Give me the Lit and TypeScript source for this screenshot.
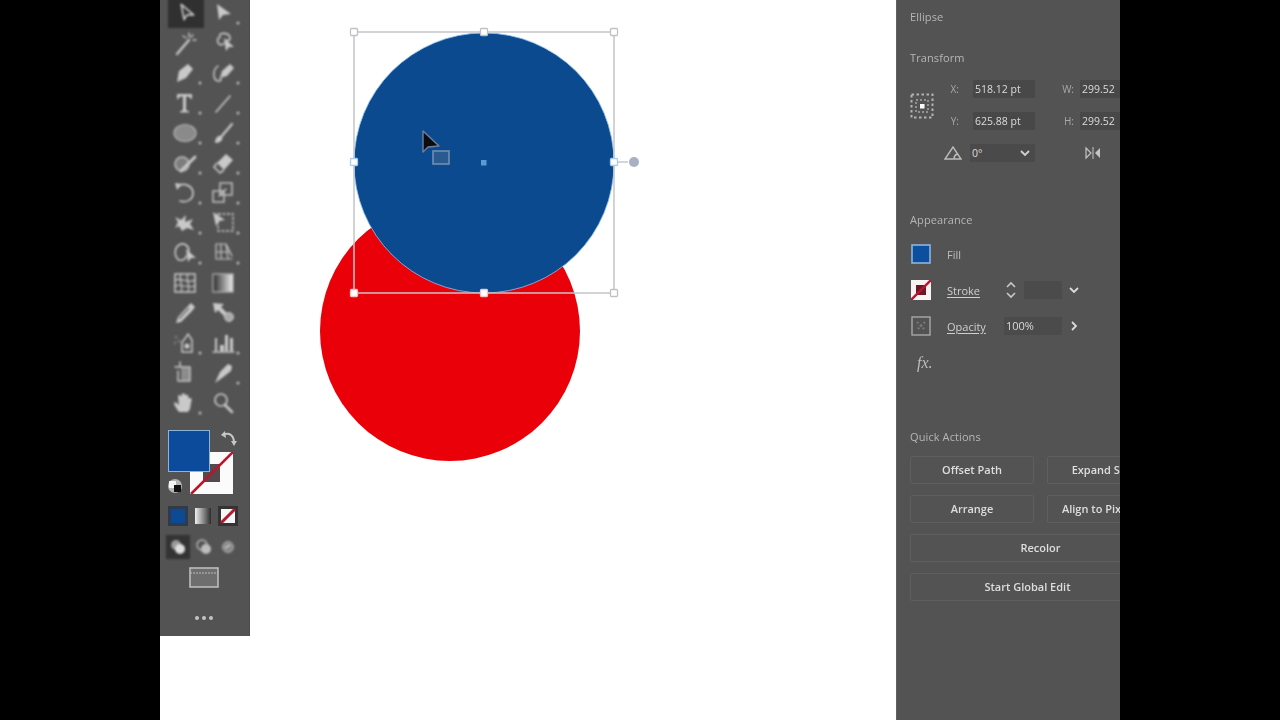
import { LitElement, html, css, svg } from "lit";
import { customElement } from "lit/decorators.js";

const S = "#c9c9c9";
const line = (d: string, w = 1.6) => svg`<path d=${d} fill="none" stroke=${S} stroke-width=${w} stroke-linecap="round" stroke-linejoin="round"/>`;
const fill = (d: string, c = S) => svg`<path d=${d} fill=${c}/>`;

type Tool = { g: unknown; dot?: boolean; sel?: boolean };
const tools: Tool[] = [
  { sel: true, g: line("M14 6 L17 22 L20 17 L27 17 Z", 1.8) },
  { dot: true, g: fill("M13 6 L15 22 L19 17 L27 16 Z") },
  { dot: false, g: svg`${line("M11 26 L23 12", 2.4)}${line("M23 5 V9 M17 8 L20 10 M27 12 H30 M27 7 L25 9", 1.4)}` },
  { g: svg`${line("M16 10 C13 4 24 4 26 9 C27 12 24 13 23 12", 1.6)}${line("M14 10 C12 16 18 19 20 15", 1.6)}${fill("M20 10 L22 23 L25 19 L30 19 Z")}` },
  { dot: true, g: fill("M11 24 L13 13 L22 6 L27 11 L20 20 Z") },
  { dot: true, g: svg`${fill("M16 20 L18 13 L26 6 L30 10 L23 18 Z")}${line("M14 8 C8 12 9 22 14 23 C17 24 18 21 16 20", 1.5)}` },
  { dot: true, g: fill("M11 6 H26 V11 H24.5 C24 9 23 8.5 21 8.5 H20 V21 C20 22.5 21 23 23 23 V24.5 H14 V23 C16 23 17 22.5 17 21 V8.5 H16 C14 8.5 13 9 12.5 11 H11 Z") },
  { dot: true, g: line("M12 24 L26 8", 1.6) },
  { dot: true, g: svg`<ellipse cx="19" cy="15" rx="11" ry="8.5" fill="#8a8a8a" stroke="#b5b5b5" stroke-width="1.2"/>` },
  { dot: true, g: svg`${line("M17 19 L28 6", 2.2)}${fill("M11 25 C11 20 14 17 17 18 C20 20 18 25 11 25 Z")}` },
  { dot: true, g: svg`<circle cx="16" cy="16" r="7" fill="#7d7d7d" stroke="#c0c0c0" stroke-width="1.5"/>${line("M15 23 L29 9", 3)}` },
  { dot: true, g: svg`<path d="M13 15 L22 6 L29 12 L20 22 Z" fill=${S}/><path d="M13 15 L10 19 L16 25 L20 22" fill="none" stroke=${S} stroke-width="1.6"/>` },
  { dot: true, g: svg`${line("M12 8 C18 4 27 8 27 15 C27 22 20 25 14 23", 1.7)}${fill("M9 5 L16 6 L11 12 Z")}` },
  { dot: true, g: svg`<rect x="9" y="13" width="11" height="11" fill="none" stroke=${S} stroke-width="1.4"/><rect x="16" y="5" width="12" height="12" fill="none" stroke=${S} stroke-width="1.4"/>${line("M15 18 L22 11", 1.2)}` },
  { dot: true, g: svg`${fill("M9 9 L15 12 L20 7 L19 14 L27 11 L24 16 L28 22 L21 20 L16 23 L13 18 L9 20 L12 14 Z")}` },
  { dot: true, g: svg`<rect x="14" y="6" width="15" height="17" fill="none" stroke=${S} stroke-width="1.4" stroke-dasharray="3 1.5"/>${fill("M9 4 L12 18 L15 13 L21 12 Z")}` },
  { dot: true, g: svg`${line("M13 7 C8 10 8 19 13 22 C18 23 20 20 20 18 M13 7 C18 4 23 8 23 13", 1.6)}${fill("M20 11 L22 24 L25 20 L30 20 Z")}` },
  { dot: true, g: svg`${line("M12 21 V6 L22 6 L28 18 M12 21 H28 M12 14 H26 M17 6 V21 M22 6 L24 21", 1.2)}` },
  { g: svg`<rect x="9" y="6" width="20" height="18" fill="none" stroke=${S} stroke-width="1.5"/>${line("M9 12 C15 9 22 16 29 12 M9 18 C15 15 22 21 29 18 M15 6 C12 12 18 18 15 24 M22 6 C19 12 25 18 22 24", 1.2)}` },
  { g: svg`<defs><linearGradient id="gr"><stop offset="0" stop-color="#2b2b2b"/><stop offset="1" stop-color="#f0f0f0"/></linearGradient></defs><rect x="9" y="6" width="20" height="18" fill="url(#gr)" stroke="#b0b0b0" stroke-width="1.3"/>` },
  { dot: false, g: svg`${fill("M10 25 L12 19 L22 8 L25 5 L29 9 L26 13 L15 24 Z")}<path d="M13 21 L23 10" stroke="#666" stroke-width="1.2"/>` },
  { g: svg`${fill("M9 5 L20 6 L17 9 L23 15 L20 18 L14 12 L11 15 Z")}<circle cx="25" cy="19" r="4.5" fill="#aaa" stroke=${S}/>` },
  { dot: true, g: svg`<path d="M18 12 L22 6 L26 12 V24 H16 V14 Z" fill="none" stroke=${S} stroke-width="1.5"/><circle cx="21" cy="18" r="2.6" fill=${S}/><circle cx="10" cy="9" r="1.6" fill="#777"/><circle cx="13" cy="13" r="1.6" fill="#777"/><circle cx="9" cy="15" r="1.4" fill="#777"/>` },
  { dot: true, g: svg`${line("M9 24 H30", 1.4)}${fill("M11 10 H13 V23 H11 Z M16 17 H20 V23 H16 Z M21 7 H24 V23 H21 Z M26 10 H29 V23 H26 Z")}` },
  { g: svg`${line("M9 9 H14 V4 M14 9 H24 V23 H12 V13", 1.5)}${fill("M15 10 H23 V22 H15 Z", "#8c8c8c")}` },
  { dot: true, g: svg`${fill("M11 25 L16 14 L24 6 L28 8 L27 13 L18 20 Z")}` },
  { dot: true, g: fill("M13 24 C10 20 8 17 8 15 C9 13 11 15 13 17 L12 8 C13 6 15 7 15 9 L16 6 C17 5 19 5 19 7 L20 7 C22 6 23 8 22 10 L24 10 C26 10 26 12 25 15 L24 21 L22 24 Z") },
  { g: svg`<circle cx="17" cy="12" r="6" fill="none" stroke=${S} stroke-width="1.7"/>${line("M21 17 L28 24", 2.6)}` },
];

@customElement("app-root")
export class AppRoot extends LitElement {
  static styles = css`
    :host { display: block; }
    .page { display: flex; width: 1280px; height: 720px; background: #000; overflow: hidden;
      font-family: "Open Sans", "Liberation Sans", sans-serif; }
    .gutter { width: 160px; flex: none; background: #000; }
    .work { width: 736px; flex: none; display: flex; background: #fff; }
    .toolbar { width: 90px; height: 636px; flex: none; background: #535353; display: flex; flex-direction: column;
      align-items: flex-start; border-right: 1px solid #4a4a4a; box-sizing: border-box; overflow: hidden; }
    .tools { display: grid; grid-template-columns: 38px 38px; grid-auto-rows: 30px; margin: -2px 0 0 6px; filter: blur(0.8px); }
    .cell { width: 38px; height: 30px; display: block; }
    .cell.sel { background: #303030; width: 36px; margin-left: 2px; }
    .colors { position: relative; width: 90px; height: 70px; margin-top: 12px; flex: none; filter: blur(0.6px); }
    .fillsw { position: absolute; left: 8px; top: 0; width: 42px; height: 42px; box-sizing: border-box; background: #0c4a9b; border: 1.5px solid #8fb4dc; z-index: 1; }
    .strokesw { position: absolute; left: 30px; top: 22px; width: 43px; height: 42px; }
    .swap { position: absolute; left: 60px; top: 0; width: 18px; height: 18px; }
    .defaults { position: absolute; left: 7px; top: 48px; width: 16px; height: 16px; }
    .modes { display: flex; gap: 5px; margin: 6px 0 0 8px; filter: blur(0.7px); flex: none; }
    .mode { width: 20px; height: 20px; display: block; }
    .draws { display: flex; gap: 4px; margin: 9px 0 0 6px; filter: blur(0.8px); align-items: center; flex: none; }
    .draw { width: 20px; height: 20px; display: block; }
    .draw.on { background: #333; width: 24px; height: 24px; }
    .screen { width: 30px; height: 21px; margin: 8px 0 0 29px; display: block; filter: blur(0.6px); flex: none; }
    .more { margin: 28px 0 0 35px; display: flex; gap: 3px; filter: blur(0.6px); }
    .more i { width: 4px; height: 4px; background: #c4c4c4; border-radius: 50%; display: block; }
    .stage { flex: 1; min-width: 0; position: relative; }
    .art { display: block; width: 646px; height: 720px; filter: blur(0.5px); }
    .panel { width: 224px; flex: none; height: 720px; background: #535353; box-sizing: border-box; padding-left: 13px;
      overflow: hidden; border-left: 1px solid #606060; color: #d6d6d6; font-size: 11px; white-space: nowrap; }
    .panel > * { filter: blur(0.7px); }
    .title { height: 16px; line-height: 16px; color: #b6b6b6; font-size: 11px; letter-spacing: 0.1px; }
    .t1 { margin-top: 9px; }
    .t2 { margin-top: 25px; }
    .t3 { margin-top: 50px; }
    .t4 { margin-top: 56px; }
    .xf { display: grid; grid-template-columns: 24px 39px 62px 45px 90px; grid-template-rows: 18px 18px 18px; row-gap: 14px; margin-top: 14px; align-items: center; }
    .anchor { grid-row: 1 / 3; grid-column: 1; width: 24px; height: 26px; display: block; margin-top: 2px; }
    .lbl { text-align: right; padding-right: 14px; color: #a9a9a9; font-size: 10px; }
    .lbl2 { padding-right: 6px; }
    .fld { background: #484848; height: 18px; line-height: 18px; padding-left: 2px; color: #dcdcdc; font-size: 10.5px; }
    .angle { display: block; width: 18px; height: 14px; justify-self: end; margin-right: 11px; }
    .anglef { display: flex; justify-content: space-between; align-items: center; padding-right: 4px; background: #4a4a4a; margin-left: -3px; }
    .flip { display: block; width: 20px; height: 14px; grid-column: 4 / 6; margin-left: 48px; }
    .prop { display: flex; align-items: center; height: 20px; margin-top: 16px; }
    .sw { width: 20px; height: 20px; flex: none; display: block; margin-left: 1px; }
    .plabel { margin-left: 16px; width: 57px; font-size: 11px; color: #cfcfcf; }
    .u { text-decoration: underline; text-underline-offset: 2px; }
    .fill-l { color: #bdbdbd; }
    .stepper { width: 14px; height: 22px; display: block; }
    .sfld { width: 38px; height: 18px; background: #4b4b4b; margin-left: 6px; }
    .ofld { width: 58px; height: 18px; line-height: 18px; background: #4b4b4b; padding-left: 2px; box-sizing: border-box; font-size: 11px; color: #d8d8d8; }
    .chev { width: 12px; height: 10px; display: block; margin-left: 6px; }
    .fx { margin: 17px 0 0 7px; height: 20px; line-height: 20px; font-family: "Liberation Serif", serif; font-style: italic; font-size: 16px; color: #bcbcbc; }
    .btns { display: grid; grid-template-columns: 124px 124px; column-gap: 13px; row-gap: 11px; margin-top: 11px; width: 261px; }
    .btn { height: 28px; line-height: 26px; box-sizing: border-box; border: 1px solid #5f5f5f; border-radius: 2px; text-align: center; font-size: 11px; font-weight: 600; color: #dedede; }
    .wide { grid-column: 1 / 3; }
    .shift { padding-right: 26px; }
  `;

  render() {
    const handles: [number, number][] = [[354, 32], [484, 32], [614, 32], [354, 162], [614, 162], [354, 293], [484, 293], [614, 293]];
    return html`<div class="page">
      <div class="gutter"></div>
      <div class="work">
        <div class="toolbar">
          <div class="tools">
            ${tools.map((t) => html`<svg class="cell ${t.sel ? "sel" : ""}" viewBox="0 0 38 30">${t.g}${t.dot ? svg`<circle cx=${t.sel ? 33 : 34} cy="25" r="1.5" fill="#bdbdbd"/>` : ""}</svg>`)}
          </div>
          <div class="colors">
            <div class="fillsw"></div>
            <svg class="strokesw" viewBox="0 0 43 42">
              <path d="M0 0H43V42H0Z M13 12V30H30V12Z" fill="#fbfbfb" fill-rule="evenodd"/>
              <rect x="13" y="12" width="17" height="18" fill="#534b4b"/>
              <path d="M1 42 L43 0" stroke="#b4182f" stroke-width="2.6"/>
            </svg>
            <svg class="swap" viewBox="0 0 18 18"><path d="M3 5 C9 2 14 5 14 13" fill="none" stroke="#c6c6c6" stroke-width="2"/><path d="M5 1 L1 5 L6 8 Z M11 11 H17 L14 16 Z" fill="#c6c6c6"/></svg>
            <svg class="defaults" viewBox="0 0 16 16"><circle cx="8" cy="8" r="7" fill="#b5b5b5"/><rect x="2" y="3" width="7" height="7" fill="#f4f4f4"/><rect x="7" y="7" width="7" height="7" fill="#111"/></svg>
          </div>
          <div class="modes">
            <svg class="mode" viewBox="0 0 20 20"><rect width="20" height="20" fill="#2e3b4c"/><rect x="3" y="3" width="14" height="14" fill="#0d4a96"/></svg>
            <svg class="mode" viewBox="0 0 20 20"><defs><linearGradient id="gm"><stop offset="0" stop-color="#f0f0f0"/><stop offset="1" stop-color="#2b2b2b"/></linearGradient></defs><rect x="2" y="2" width="16" height="16" fill="url(#gm)"/></svg>
            <svg class="mode" viewBox="0 0 20 20"><rect width="20" height="20" fill="#333"/><rect x="3" y="3" width="14" height="14" fill="#f5f5f5"/><path d="M3 17 L17 3" stroke="#b4182f" stroke-width="3"/></svg>
          </div>
          <div class="draws">
            <svg class="draw on" viewBox="0 0 24 24"><circle cx="10" cy="10" r="5" fill="#9a9a9a"/><circle cx="14" cy="14" r="5" fill="#dedede"/></svg>
            <svg class="draw" viewBox="0 0 20 20"><circle cx="8" cy="8" r="5" fill="none" stroke="#bbb" stroke-width="1.4"/><circle cx="12" cy="12" r="5" fill="#bdbdbd"/></svg>
            <svg class="draw" viewBox="0 0 20 20"><circle cx="10" cy="10" r="5.5" fill="#8a8a8a" stroke="#aaa"/><path d="M7 11 L12 8" stroke="#ddd" stroke-width="1.3"/></svg>
          </div>
          <svg class="screen" viewBox="0 0 30 21"><rect x="1" y="1" width="28" height="19" fill="#6e6e6e" stroke="#bcbcbc" stroke-width="1.6"/><path d="M1 6 H29" stroke="#bcbcbc" stroke-width="1.2" stroke-dasharray="2 1"/></svg>
          <div class="more"><i></i><i></i><i></i></div>
        </div>
        <div class="stage">
          <svg class="art" viewBox="250 0 646 720">
            <circle cx="450" cy="331" r="130" fill="#e90008"/>
            <circle cx="484" cy="163" r="130" fill="#0c4a8f" stroke="#8fc2ee" stroke-width="0.8"/>
            <rect x="354" y="32" width="260" height="261" fill="none" stroke="#c3c5c9" stroke-width="1.5"/>
            <path d="M614 162 H628" stroke="#c3c5c9" stroke-width="1.4"/>
            <circle cx="634" cy="162" r="5" fill="#aab0c4"/>
            ${handles.map(([x, y]) => {
              const solid = y === 293 && x < 600;
              const side = y === 162;
              return svg`<rect x=${x - 3.5} y=${y - 3.5} width="7" height="7" rx="1" fill="#fff" stroke=${solid ? "#f3c4c4" : side ? "#a9cdee" : "#bfc1c5"} stroke-width="1.3"/>`;
            })}
            <rect x="481" y="160" width="5.5" height="5.5" fill="#5b9bd5"/>
            <path d="M423 131 L423 152 L428 147 L439 146 Z" fill="#0b0d12" stroke="#6f8199" stroke-width="1.4" stroke-linejoin="round"/>
            <rect x="433" y="151" width="16" height="13" fill="#2a5a90" stroke="#6f8fb2" stroke-width="1.6"/>
          </svg>
        </div>
      </div>
      <div class="panel">
        <div class="title t1">Ellipse</div>
        <div class="title t2">Transform</div>
        <div class="xf">
          <svg class="anchor" viewBox="0 0 24 26">
            <rect x="1.5" y="1.5" width="21" height="23" fill="none" stroke="#b4b4b4" stroke-width="2" stroke-dasharray="2.5 2.5"/>
            <rect x="6" y="7" width="12" height="12" fill="none" stroke="#a8a8a8" stroke-width="1.5" stroke-dasharray="2 2"/>
            <rect x="10" y="11" width="4.5" height="4.5" fill="#fff"/>
          </svg>
          <div class="lbl">X:</div><div class="fld">518.12 pt</div><div class="lbl lbl2">W:</div><div class="fld">299.52</div>
          <div class="lbl">Y:</div><div class="fld">625.88 pt</div><div class="lbl lbl2">H:</div><div class="fld">299.52</div>
          <div></div>
          <svg class="angle" viewBox="0 0 18 14"><path d="M1 13 H17 L9 1 Z M10 13 C10 10 11 9 13 8" fill="none" stroke="#bcbcbc" stroke-width="1.4"/></svg>
          <div class="fld anglef"><span>0°</span><svg class="chev" viewBox="0 0 12 10"><path d="M2 3 L6 7 L10 3" fill="none" stroke="#d0d0d0" stroke-width="1.8"/></svg></div>
          <svg class="flip" viewBox="0 0 20 14"><path d="M3 2 V12 L8 7 Z" fill="none" stroke="#c4c4c4" stroke-width="1.2"/><path d="M10 1 V13" stroke="#c4c4c4"/><path d="M17 2 V12 L12 7 Z" fill="#c4c4c4"/></svg>
        </div>
        <div class="title t3">Appearance</div>
        <div class="prop">
          <svg class="sw" viewBox="0 0 20 20"><rect x="1" y="1" width="18" height="18" fill="#0c4f9e" stroke="#8cb4de" stroke-width="1.6"/></svg>
          <span class="plabel fill-l">Fill</span>
        </div>
        <div class="prop">
          <svg class="sw" viewBox="0 0 20 20"><rect width="20" height="20" fill="#f7f3f3"/><rect x="5" y="5" width="10" height="10" fill="#6b1826"/><path d="M0 20 L20 0" stroke="#b4182f" stroke-width="2.4"/></svg>
          <span class="plabel u">Stroke</span>
          <svg class="stepper" viewBox="0 0 14 22"><path d="M3 8 L7 4 L11 8 M3 14 L7 18 L11 14" fill="none" stroke="#c8c8c8" stroke-width="1.6"/></svg>
          <div class="sfld"></div>
          <svg class="chev" viewBox="0 0 12 10"><path d="M2 3 L6 7 L10 3" fill="none" stroke="#dadada" stroke-width="1.8"/></svg>
        </div>
        <div class="prop">
          <svg class="sw" viewBox="0 0 20 20"><rect x="1" y="1" width="18" height="18" fill="none" stroke="#a8a8a8" stroke-width="1.4"/><path d="M6 6 L14 14 M14 6 L6 14" stroke="#787878" stroke-width="2" stroke-dasharray="2 2"/></svg>
          <span class="plabel u">Opacity</span>
          <div class="ofld">100%</div>
          <svg class="chev" viewBox="0 0 12 10"><path d="M4 1 L8 5 L4 9" fill="none" stroke="#dadada" stroke-width="1.8"/></svg>
        </div>
        <div class="fx">fx.</div>
        <div class="title t4">Quick Actions</div>
        <div class="btns">
          <div class="btn">Offset Path</div>
          <div class="btn">Expand Shape</div>
          <div class="btn">Arrange</div>
          <div class="btn">Align to Pixel Grid</div>
          <div class="btn wide">Recolor</div>
          <div class="btn wide shift">Start Global Edit</div>
        </div>
      </div>
      <div class="gutter"></div>
    </div>`;
  }
}
